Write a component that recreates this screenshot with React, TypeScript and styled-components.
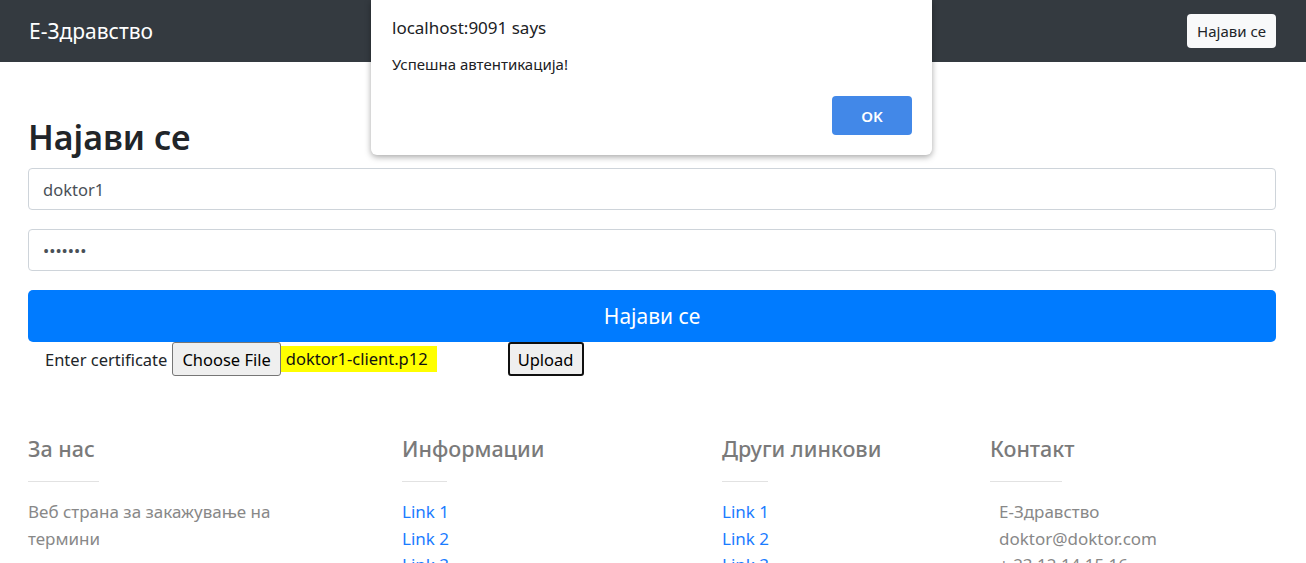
import React from "react";
import styled, { createGlobalStyle } from "styled-components";

const GlobalStyle = createGlobalStyle`
    html, body {
        margin: 0;
        padding: 0;
        background: #fff;
        font-family: "Noto Sans", "Open Sans", sans-serif;
        color: #212529;
        overflow: hidden;
    }
`

const Page = styled.div`
    position: relative;
    width: 1306px;
    height: 563px;
    overflow: hidden;
`

const Navbar = styled.nav`
    height: 62px;
    background: #343a40;
    display: flex;
    align-items: center;
    justify-content: space-between;
    padding: 0 30px 0 29px;
`

const Brand = styled.span`
    color: #fff;
    font-size: 21px;
`

const NavButton = styled.button`
    height: 34px;
    padding: 0 10px;
    border: none;
    border-radius: 4px;
    background: #f8f9fa;
    color: #212529;
    font-family: inherit;
    font-size: 15px;
`

const Main = styled.main`
    padding: 50px 30px 0 28px;
`

const Title = styled.h1`
    margin: 0 0 6px;
    font-size: 34px;
    font-weight: 600;
    line-height: 50px;
    color: #212529;
`

const Input = styled.input`
    display: block;
    box-sizing: border-box;
    width: 100%;
    height: 42px;
    margin: 0 0 19px;
    padding: 0 14px;
    border: 1px solid #ced4da;
    border-radius: 4px;
    font-family: inherit;
    font-size: 16.5px;
    color: #495057;
    outline: none;
`

const SubmitButton = styled.button`
    display: block;
    width: 100%;
    height: 52px;
    border: none;
    border-radius: 5px;
    background: #007bff;
    color: #fff;
    font-family: inherit;
    font-size: 21px;
`

const CertRow = styled.div`
    display: flex;
    align-items: center;
    height: 34px;
    padding-left: 17px;
    font-size: 16.5px;
`

const CertLabel = styled.span`
    margin-right: 5px;
`

const FileButton = styled.span<{ $focused?: boolean }>`
    box-sizing: border-box;
    height: 34px;
    display: inline-flex;
    align-items: center;
    padding: 0 ${p => p.$focused ? 8 : 9}px;
    background: #efefef;
    border: ${p => p.$focused ? "2px solid #101010" : "1px solid #767676"};
    border-radius: 3px;
    font-size: 16.5px;
    color: #000;
`

const FileName = styled.span`
    background: #ffff00;
    padding: 1px 9px 2px 5px;
    margin-right: 71px;
    font-size: 16.5px;
    color: #111;
`

const Footer = styled.footer`
    display: grid;
    grid-template-columns: 374px 320px 268px 1fr;
    padding: 58px 30px 0 28px;
`

const FooterCol = styled.div<{ $indent?: number }>`
    & > p, & > a {
        margin-left: ${p => p.$indent || 0}px;
    }
`

const FooterHeading = styled.h5`
    margin: 0;
    font-size: 21.5px;
    font-weight: 500;
    line-height: 30px;
    color: #7a7a7a;
`

const Rule = styled.hr<{ $width: number }>`
    width: ${p => p.$width}px;
    margin: 17px 0 17px;
    border: none;
    border-top: 1px solid #e2e2e2;
`

const FooterText = styled.p`
    margin: 0;
    max-width: 280px;
    font-size: 17px;
    line-height: 26.5px;
    color: #888;
`

const FooterLink = styled.a`
    display: block;
    font-size: 17px;
    line-height: 26.5px;
    color: #1a7cff;
    text-decoration: none;
`

const Dialog = styled.div`
    position: absolute;
    left: 371px;
    top: 0;
    width: 561px;
    height: 155px;
    box-sizing: border-box;
    background: #fff;
    border-radius: 0 0 6px 6px;
    box-shadow: 0 2px 6px rgba(0, 0, 0, 0.35);
    padding: 16px 20px 0 21px;
    display: flex;
    flex-direction: column;
`

const DialogTitle = styled.div`
    font-size: 17px;
    line-height: 24px;
    color: #202124;
`

const DialogMessage = styled.div`
    margin-top: 14px;
    font-size: 15px;
    line-height: 20px;
    color: #202124;
`

const DialogActions = styled.div`
    display: flex;
    justify-content: flex-end;
    margin-top: 22px;
`

const OkButton = styled.button`
    width: 80px;
    height: 39px;
    border: none;
    border-radius: 4px;
    background: #4288e8;
    color: #fff;
    font-family: inherit;
    font-size: 15px;
    font-weight: 600;
`

const aboutLinks = ["Link 1", "Link 2", "Link 3"];

export default function App() {
    return (
        <Page>
            <GlobalStyle />
            <Navbar>
                <Brand>Е-Здравство</Brand>
                <NavButton>Најави се</NavButton>
            </Navbar>

            <Main>
                <Title>Најави се</Title>
                <Input type="text" defaultValue="doktor1" />
                <Input type="password" defaultValue="doktor1" />
                <SubmitButton>Најави се</SubmitButton>
                <CertRow>
                    <CertLabel>Enter certificate</CertLabel>
                    <FileButton>Choose File</FileButton>
                    <FileName>doktor1-client.p12</FileName>
                    <FileButton $focused>Upload</FileButton>
                </CertRow>
            </Main>

            <Footer>
                <FooterCol>
                    <FooterHeading>За нас</FooterHeading>
                    <Rule $width={71} />
                    <FooterText>Веб страна за закажување на термини</FooterText>
                </FooterCol>
                <FooterCol>
                    <FooterHeading>Информации</FooterHeading>
                    <Rule $width={45} />
                    {aboutLinks.map(l => <FooterLink key={l} href="#">{l}</FooterLink>)}
                </FooterCol>
                <FooterCol>
                    <FooterHeading>Други линкови</FooterHeading>
                    <Rule $width={46} />
                    {aboutLinks.map(l => <FooterLink key={l} href="#">{l}</FooterLink>)}
                </FooterCol>
                <FooterCol $indent={9}>
                    <FooterHeading>Контакт</FooterHeading>
                    <Rule $width={72} />
                    <FooterText>Е-Здравство</FooterText>
                    <FooterText>doktor@doktor.com</FooterText>
                    <FooterText>+ 23 12 14 15 16</FooterText>
                </FooterCol>
            </Footer>

            <Dialog>
                <DialogTitle>localhost:9091 says</DialogTitle>
                <DialogMessage>Успешна автентикација!</DialogMessage>
                <DialogActions>
                    <OkButton>OK</OkButton>
                </DialogActions>
            </Dialog>
        </Page>
    );
}
